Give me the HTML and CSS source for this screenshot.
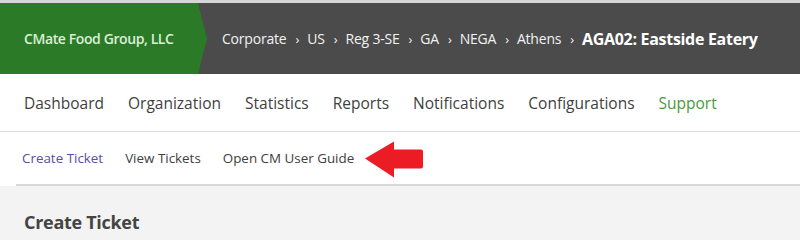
FILE: index.html
```html
<!DOCTYPE html>
<html>
<head>
<meta charset="utf-8">
<link rel="stylesheet" href="styles.css">
</head>
<body>
<header class="topbar">
  <div class="org">CMate Food Group, LLC</div>
  <nav class="crumbs">
    <span>Corporate</span><span class="sep">›</span>
    <span>US</span><span class="sep">›</span>
    <span>Reg 3-SE</span><span class="sep">›</span>
    <span>GA</span><span class="sep">›</span>
    <span>NEGA</span><span class="sep">›</span>
    <span>Athens</span><span class="sep">›</span>
    <span class="current">AGA02: Eastside Eatery</span>
  </nav>
</header>
<nav class="mainnav">
  <a>Dashboard</a>
  <a>Organization</a>
  <a>Statistics</a>
  <a>Reports</a>
  <a>Notifications</a>
  <a>Configurations</a>
  <a class="active">Support</a>
</nav>
<nav class="subnav">
  <a class="active">Create Ticket</a>
  <a>View Tickets</a>
  <a>Open CM User Guide</a>
  <svg class="arrow" width="60" height="37" viewBox="0 0 60 37"><path d="M1 17.5 L30 0.5 L30 8.5 L57 8.5 Q59 8.5 59 10.5 L59 25.5 Q59 27.5 57 27.5 L30 27.5 L30 36.5 Z" fill="#ec1c24"/></svg>
</nav>
<main class="content">
  <h1>Create Ticket</h1>
</main>
</body>
</html>
```
FILE: styles.css
```css
html, body { margin: 0; padding: 0; }
body { width: 800px; height: 240px; overflow: hidden; background: #fff; }
a { text-decoration: none; }
.topbar {
  display: flex;
  align-items: stretch;
  height: 71px;
  border-top: 3px solid #d6d6d6;
  background: #4b4b4b;
  font-family: "Open Sans", "Noto Sans", sans-serif;
}
.org {
  flex: none;
  box-sizing: border-box;
  width: 207px;
  display: flex;
  align-items: center;
  padding-left: 24px;
  white-space: nowrap;
  background: #2b7a27;
  color: #dcefd8;
  font-weight: 600;
  font-size: 14px;
  letter-spacing: -0.4px;
  clip-path: polygon(0 0, 198px 0, 207px 50%, 198px 100%, 0 100%);
}
.crumbs {
  display: flex;
  align-items: center;
  padding-left: 15px;
  white-space: nowrap;
  color: #f2f2f2;
  font-size: 14px;
  letter-spacing: -0.2px;
}
.crumbs .sep { margin: 0 8px 0 9px; font-size: 13px; }
.crumbs .current { font-weight: 700; font-size: 16px; color: #fff; letter-spacing: -0.3px; }
.mainnav {
  display: flex;
  align-items: center;
  gap: 24px;
  height: 57px;
  padding-left: 24px;
  border-bottom: 1px solid #dcdcdc;
  font-family: "Open Sans", "Noto Sans", sans-serif;
  font-size: 15.5px;
  font-weight: 500;
  color: #3f3f3f;
}
.mainnav .active { color: #4a9a3c; }
.subnav {
  display: flex;
  align-items: center;
  gap: 22px;
  height: 52px;
  margin-left: 16px;
  padding-left: 6px;
  border-bottom: 2px solid #d9d9d9;
  font-family: "Open Sans", "Noto Sans", sans-serif;
  font-size: 13.4px;
  color: #404040;
}
.subnav .active { color: #5a4d9e; }
.subnav .arrow { margin-left: -12px; margin-top: 2px; }
.content {
  background: #f3f3f3;
  height: 31px;
  padding: 24px 24px 0;
}
.content h1 {
  margin: 0;
  font-family: "Open Sans", "Noto Sans", sans-serif;
  font-size: 18px;
  line-height: 25px;
  font-weight: 700;
  color: #444;
  letter-spacing: -0.3px;
}
```
